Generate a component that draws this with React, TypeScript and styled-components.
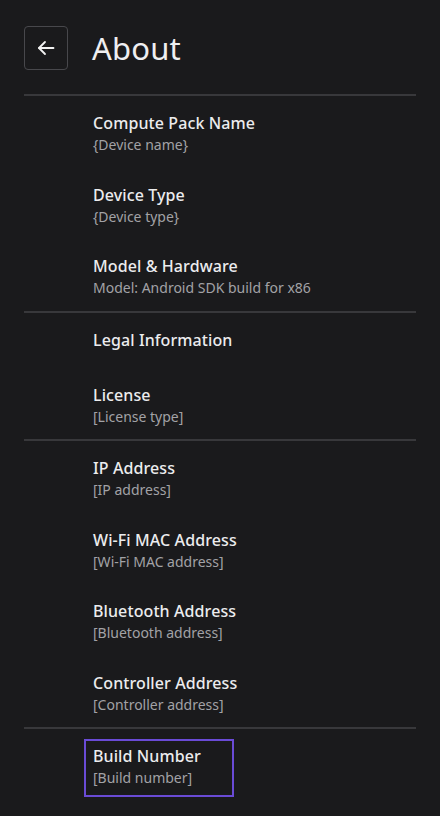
import React from 'react'
import styled, { createGlobalStyle } from 'styled-components'

const GlobalStyle = createGlobalStyle`
  html, body {
    margin: 0;
    padding: 0;
    background: #1a1a1c;
  }

  body {
    font-family: 'Noto Sans', 'Open Sans', sans-serif;
    color: #ececee;
  }
`

const Page = styled.div`
  width: 440px;
  min-height: 816px;
  background: #1a1a1c;
  display: flex;
  flex-direction: column;
`

const Header = styled.header`
  display: flex;
  align-items: center;
  gap: 24px;
  height: 44px;
  padding: 26px 24px 0;
  margin-bottom: 24px;

  h1 {
    margin: 0;
    font-size: 31px;
    font-weight: 400;
    color: #efeff1;
    letter-spacing: 0.2px;
  }
`

const BackButton = styled.button`
  width: 44px;
  height: 44px;
  box-sizing: border-box;
  border: 1.5px solid #48484c;
  border-radius: 4px;
  background: transparent;
  color: #f2f2f2;
  display: flex;
  align-items: center;
  justify-content: center;
  padding: 0;
`

const Divider = styled.div`
  margin: 0 24px;
  height: 2px;
  flex-shrink: 0;
  background: #38383b;
`

const Row = styled.div<{ $single?: boolean }>`
  display: flex;
  align-items: flex-start;
  padding: 10px 0 ${p => (p.$single ? '9px' : '3.5px')} 84px;
`

const TextBlock = styled.div<{ $focused?: boolean }>`
  display: flex;
  flex-direction: column;
  box-sizing: border-box;
  min-width: ${p => (p.$focused ? '150px' : '0')};
  padding: 4px 7px 6px;
  border: 2px solid ${p => (p.$focused ? '#6a4bd6' : 'transparent')};

  .label {
    font-size: 16px;
    font-weight: 500;
    line-height: 22px;
    color: #ececee;
    letter-spacing: 0.1px;
  }

  .value {
    font-size: 14px;
    line-height: 22px;
    color: #a2a2a6;
  }
`

type Item = { label: string; value?: string; focused?: boolean }

const sections: Item[][] = [
  [
    { label: 'Compute Pack Name', value: '{Device name}' },
    { label: 'Device Type', value: '{Device type}' },
    { label: 'Model & Hardware', value: 'Model: Android SDK build for x86' },
  ],
  [
    { label: 'Legal Information' },
    { label: 'License', value: '[License type]' },
  ],
  [
    { label: 'IP Address', value: '[IP address]' },
    { label: 'Wi-Fi MAC Address', value: '[Wi-Fi MAC address]' },
    { label: 'Bluetooth Address', value: '[Bluetooth address]' },
    { label: 'Controller Address', value: '[Controller address]' },
  ],
  [{ label: 'Build Number', value: '[Build number]', focused: true }],
]

const App: React.FC = () => {
  return (
    <Page>
      <GlobalStyle />
      <Header>
        <BackButton aria-label="Back">
          <svg width="24" height="24" viewBox="0 0 24 24" fill="none" stroke="currentColor" strokeWidth="1.8" strokeLinecap="round" strokeLinejoin="round">
            <path d="M19.5 12H5" />
            <path d="M11 6l-6 6 6 6" />
          </svg>
        </BackButton>
        <h1>About</h1>
      </Header>

      {sections.map((items, i) => (
        <React.Fragment key={i}>
          <Divider />
          {items.map(item => (
            <Row key={item.label} $single={!item.value}>
              <TextBlock $focused={item.focused}>
                <span className="label">{item.label}</span>
                {item.value && <span className="value">{item.value}</span>}
              </TextBlock>
            </Row>
          ))}
        </React.Fragment>
      ))}
    </Page>
  )
}

export default App
